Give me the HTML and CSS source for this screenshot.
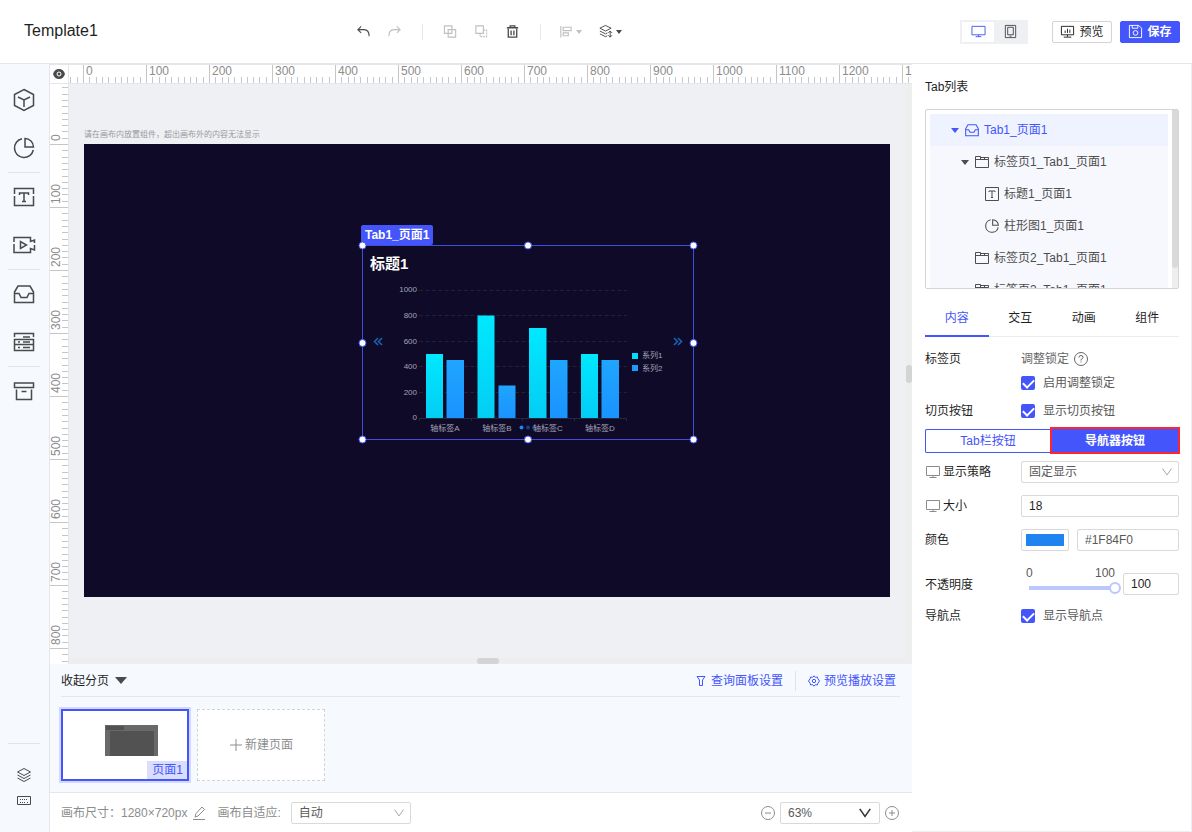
FILE: index.html
```html
<!DOCTYPE html>
<html lang="zh-CN">
<head>
    <meta charset="UTF-8">
    <title>Template1</title>
    <link rel="stylesheet" href="styles.css">
</head>
<body>
    <svg class="defs" width="0" height="0" aria-hidden="true">
        <defs>
            <symbol id="chevron" viewBox="0 0 12 12"><path d="M1.500 2.500 6 9 10.500 2.500" /></symbol>
            <symbol id="screen" viewBox="0 0 16 16"><path d="M1.500 2.500h13v9h-13zM8 11.500v2M4.500 13.500h7" /></symbol>
            <symbol id="pie" viewBox="0 0 24 24"><path d="M10 2.700A9.500 9.500 0 1 0 21.300 14M13 2.500v8.500h8.500A8.500 8.500 0 0 0 13 2.500z" /></symbol>
            <symbol id="folder" viewBox="0 0 16 16"><path d="M1.500 13.500v-11h5v3M1.500 5.500h13v8h-13M6.500 3.500h8v2M10.500 3.500v2" /></symbol>
            <symbol id="tray" viewBox="0 0 24 24"><path d="M2.500 10 6 4h12l3.500 6v10.500h-19zM2.500 11.500h4.500l2 4h6l2-4h4.500" /></symbol>
            <symbol id="layers" viewBox="0 0 16 16"><path d="M8 1.500 14.500 5 8 8.500 1.500 5zM1.500 8 8 11.500 14.500 8M1.500 11 8 14.500 14.500 11" /></symbol>
        </defs>
    </svg>

    <header class="header">
        <h1 class="title">Template1</h1>
        <div class="toolbar">
            <button class="tool" aria-label="撤销"><svg viewBox="0 0 16 16"><path d="M5.500 2.500 2 6l3.500 3.500M2 6h6.500Q14 6 14 13" stroke-width="1.200" /></svg></button>
            <button class="tool off" aria-label="重做"><svg viewBox="0 0 16 16"><path d="M10.500 2.500 14 6l-3.500 3.500M14 6H7.500Q2 6 2 13" stroke-width="1.200" /></svg></button>
            <span class="tool-line"></span>
            <button class="tool off" aria-label="组合"><svg viewBox="0 0 16 16"><path d="M1.500 2h8v8h-8zM5.500 6h8v8h-8z" stroke-width="1.200" /></svg></button>
            <button class="tool off" aria-label="取消组合"><svg viewBox="0 0 16 16"><path d="M2 2h8v8H2z" stroke-width="1.200" /><path d="M10 6.500h3.500v7h-7V10" stroke-width="1.200" stroke-dasharray="2 1" /></svg></button>
            <button class="tool" aria-label="删除"><svg viewBox="0 0 16 16"><path d="M2 4h12M5.500 4V2h5v2M3.500 5v9h9V5M6.500 7v5M9.500 7v5" stroke-width="1.400" /></svg></button>
            <span class="tool-line"></span>
            <button class="tool off wide" aria-label="对齐"><svg viewBox="0 0 16 16"><path d="M3 2v12.500M5.500 3.500H14v3.500H5.500zM5.500 9.500H11v3H5.500z" stroke-width="1.200" /></svg><i class="caret"></i></button>
            <button class="tool wide" aria-label="层级"><svg viewBox="0 0 16 16"><path d="M8 1.500 14 4.500 8 7.500 2 4.500zM2 7.500 8 10.500 10 9.500M2 10.500 8 13.500 10 12.500M13 7.500v6.500M11 9.500l2-2 2 2M11 12l2 2 2-2" /></svg><i class="caret"></i></button>
        </div>
        <div class="device">
            <button class="device-btn active" aria-label="电脑端"><svg viewBox="0 0 16 16"><path d="M1 2.500h14v9H1zM8 11.500v2M5 13.500h6" /></svg></button>
            <button class="device-btn" aria-label="移动端"><svg viewBox="0 0 16 16"><path d="M2.500 1.500h11v13h-11zM5 3.500h6v8H5zM7 13h2" /></svg></button>
        </div>
        <button class="btn"><svg viewBox="0 0 16 16"><path d="M1.500 2.500h13v9h-13zM8 11.500v2M4 14h8M5.500 7v2.500M8 5v4.500M10.500 6v3.500" /></svg>预览</button>
        <button class="btn primary"><svg viewBox="0 0 16 16"><path d="M1.500 1.500h10l3 3v10h-13zM4.500 1.500v3h6v-3" /><circle cx="8" cy="9.500" r="2.500" /></svg>保存</button>
    </header>

    <div class="workspace">
        <nav class="sidebar">
            <button class="side-btn" aria-label="组件"><svg viewBox="0 0 24 24"><path d="M12 1.500 21.500 6.500v11L12 22.500 2.500 17.500v-11zM6 9l6 3 6-3M12 12v7" /></svg></button>
            <button class="side-btn" aria-label="图表"><svg><use href="#pie" /></svg></button>
            <span class="side-line"></span>
            <button class="side-btn" aria-label="文本"><svg viewBox="0 0 24 24"><path d="M2.500 9V3.500h19V9M2.500 11v9.500h19V11M7.500 10V8h9v2M12 8v8.500M10 16.500h4" /></svg></button>
            <button class="side-btn" aria-label="媒体"><svg viewBox="0 0 24 24"><path d="M2 9V4.500h16.500v4l4-1.500v3M2 11v8.500h16.500v-4l4 1.500V12M8.500 8.500v7l6-3.500z" /></svg></button>
            <span class="side-line"></span>
            <button class="side-btn" aria-label="容器"><svg><use href="#tray" /></svg></button>
            <button class="side-btn" aria-label="控件"><svg viewBox="0 0 24 24"><path d="M2.500 7V3.500h19V7M11 7h7M2.500 9.500h19v5h-19zM2.500 14.500h19v6h-19zM6 12h2M11 12h7M6 17.500h2M11 17.500h7" /></svg></button>
            <span class="side-line"></span>
            <button class="side-btn" aria-label="素材"><svg viewBox="0 0 24 24"><path d="M2.500 4h19v4.500h-19zM4.500 10.500v10h15v-10M9.500 12.500h5" /></svg></button>
            <div class="side-bottom">
                <span class="side-line"></span>
                <button class="side-btn small" aria-label="图层"><svg><use href="#layers" /></svg></button>
                <button class="side-btn small" aria-label="快捷键"><svg viewBox="0 0 16 16"><path d="M1.500 3.500h13v8h-13z" /><path d="M4 6.500h8M4 9.500h1M6 9.500h4M11 9.500h1" stroke-dasharray="1 1" /></svg></button>
            </div>
        </nav>

        <main class="center">
            <div class="canvas-area">
                <button class="corner" aria-label="显示参考线"><svg viewBox="0 0 14 12"><path d="M1 6Q2.500 1 7 1t6 5Q11.500 11 7 11T1 6z" fill="#4a4a4a" /><circle cx="7" cy="6" r="2" fill="none" stroke="#fff" /></svg></button>
                <svg class="ruler ruler-x">
                    <defs>
                        <pattern id="ticksX" x="14" width="63" height="19" patternUnits="userSpaceOnUse">
                            <path d="M0 0h1v18H0zM6 12h1v6H6zM13 12h1v6h-1zM19 12h1v6h-1zM25 12h1v6h-1zM32 12h1v6h-1zM38 12h1v6h-1zM44 12h1v6h-1zM50 12h1v6h-1zM57 12h1v6h-1z" fill="#c6c6c6" />
                        </pattern>
                    </defs>
                    <rect width="100%" height="19" fill="url(#ticksX)" />
                    <g><text x="17" y="10">0</text><text x="80" y="10">100</text><text x="143" y="10">200</text><text x="206" y="10">300</text><text x="269" y="10">400</text><text x="332" y="10">500</text><text x="395" y="10">600</text><text x="458" y="10">700</text><text x="521" y="10">800</text><text x="584" y="10">900</text><text x="647" y="10">1000</text><text x="710" y="10">1100</text><text x="773" y="10">1200</text><text x="836" y="10">1300</text></g>
                </svg>
                <svg class="ruler ruler-y">
                    <defs>
                        <pattern id="ticksY" y="60" width="19" height="63" patternUnits="userSpaceOnUse">
                            <path d="M0 0h18v1H0zM12 6h6v1h-6zM12 13h6v1h-6zM12 19h6v1h-6zM12 25h6v1h-6zM12 32h6v1h-6zM12 38h6v1h-6zM12 44h6v1h-6zM12 50h6v1h-6zM12 57h6v1h-6z" fill="#c6c6c6" />
                        </pattern>
                    </defs>
                    <rect width="19" height="100%" fill="url(#ticksY)" />
                    <g transform="rotate(-90)"><text x="-57" y="10">0</text><text x="-120" y="10">100</text><text x="-183" y="10">200</text><text x="-246" y="10">300</text><text x="-309" y="10">400</text><text x="-372" y="10">500</text><text x="-435" y="10">600</text><text x="-498" y="10">700</text><text x="-561" y="10">800</text></g>
                </svg>
                <section class="stage">
                    <p class="hint">请在画布内放置组件，超出画布外的内容无法显示</p>
                    <div class="canvas">
                        <div class="widget">
                            <span class="widget-tag">Tab1_页面1</span>
                            <h2 class="widget-title">标题1</h2>
                            <svg class="chart" viewBox="0 0 332 195">
                                <defs>
                                    <linearGradient id="cyan" x2="0" y2="1"><stop stop-color="#00e8ff" /><stop offset="1" stop-color="#04cdf4" /></linearGradient>
                                    <linearGradient id="blue" x2="0" y2="1"><stop stop-color="#1fa5ff" /><stop offset="1" stop-color="#1a93ff" /></linearGradient>
                                </defs>
                                <path d="M57 45.500h208M57 70.500h208M57 96.500h208M57 121.500h208M57 147.500h208" stroke="#1b2439" stroke-dasharray="4 2.400" />
                                <path d="M57 173.500h208M57.500 173v3M109.500 173v3M160.500 173v3M212.500 173v3M264.500 173v3" stroke="#1e2a40" fill="none" />
                                <g fill="url(#cyan)">
                                    <rect x="64" y="109" width="17" height="64" />
                                    <rect x="115.500" y="70.500" width="17" height="102.500" />
                                    <rect x="167" y="83" width="17.500" height="90" />
                                    <rect x="219" y="109" width="17" height="64" />
                                </g>
                                <g fill="url(#blue)">
                                    <rect x="84.500" y="115" width="17.500" height="58" />
                                    <rect x="136.500" y="140.500" width="17" height="32.500" />
                                    <rect x="188" y="115" width="17.500" height="58" />
                                    <rect x="239.500" y="115" width="17.500" height="58" />
                                </g>
                                <g class="axis axis-y">
                                    <text x="55" y="47">1000</text><text x="55" y="73">800</text><text x="55" y="99">600</text>
                                    <text x="55" y="124">400</text><text x="55" y="150">200</text><text x="55" y="175">0</text>
                                </g>
                                <circle cx="159.500" cy="182.500" r="2" fill="#1f84f0" />
                                <circle cx="166" cy="182.500" r="2" fill="#173f7c" />
                                <circle cx="172" cy="182.500" r="2" fill="#173f7c" />
                                <g class="axis axis-x">
                                    <text x="83" y="186">轴标签A</text><text x="135" y="186">轴标签B</text>
                                    <text x="186" y="186">轴标签C</text><text x="238" y="186">轴标签D</text>
                                </g>
                                <rect x="270" y="108" width="6" height="6" fill="#00dcf9" />
                                <rect x="270" y="120" width="6" height="6" fill="#1c9bff" />
                                <g class="axis"><text x="280" y="113">系列1</text><text x="280" y="126">系列2</text></g>
                                <path d="M16 93l-3.500 3.500L16 100M20 93l-3.500 3.500L20 100M312 93l3.500 3.500L312 100M316 93l3.500 3.500L316 100" stroke="#1a62b6" stroke-width="1.600" fill="none" />
                            </svg>
                            <svg class="handles" viewBox="0 0 340 203">
                                <rect x="4.500" y="4.500" width="331" height="194" fill="none" stroke="#3f4ce0" />
                                <g fill="#fff" stroke="#4355fb"><circle cx="4.500" cy="4.500" r="3.500" /><circle cx="170" cy="4.500" r="3.500" /><circle cx="335.500" cy="4.500" r="3.500" /><circle cx="4.500" cy="102" r="3.500" /><circle cx="335.500" cy="102" r="3.500" /><circle cx="4.500" cy="198.500" r="3.500" /><circle cx="170" cy="198.500" r="3.500" /><circle cx="335.500" cy="198.500" r="3.500" /></g>
                            </svg>
                        </div>
                    </div>
                </section>
                <div class="bar-y"><i></i></div>
                <div class="bar-x"><i></i></div>
            </div>

            <section class="pages">
                <div class="pages-head">
                    <button class="collapse">收起分页<i class="caret"></i></button>
                    <a class="link" href="#"><svg viewBox="0 0 12 12"><path d="M2 1.500h8L7.500 5v5.500h-3V5z" /></svg>查询面板设置</a>
                    <a class="link" href="#"><svg viewBox="0 0 12 12"><path d="M6 .8 7.300 2.300 9.300 2 10 3.900 11.500 6 10 8.100 9.300 10 7.300 9.700 6 11.200 4.700 9.700 2.700 10 2 8.100.5 6 2 3.900 2.700 2 4.700 2.300z" /><circle cx="6" cy="6" r="1.700" /></svg>预览播放设置</a>
                </div>
                <div class="page-list">
                    <button class="page active">
                        <svg class="thumb" viewBox="0 0 53 31"><path d="M0 0h53v31H0z" fill="#696969" /><path d="M1 1h18v4H1zM5 6h44v25H5z" fill="#525252" /></svg>
                        <span class="page-name">页面1</span>
                    </button>
                    <button class="page new"><svg viewBox="0 0 14 14"><path d="M1 7h12M7 1v12" /></svg>新建页面</button>
                </div>
            </section>

            <footer class="footer">
                <span>画布尺寸：1280×720px</span>
                <button class="round" aria-label="编辑尺寸"><svg viewBox="0 0 14 14"><path d="M1 13.500h12M3 11l1-3.500L10 1l2.500 2.500L6 10z" /></svg></button>
                <label class="fit-label" for="fit">画布自适应:</label>
                <div class="select fit"><select id="fit"><option>自动</option></select><svg><use href="#chevron" /></svg></div>
                <div class="zoom">
                    <button class="round" aria-label="缩小"><svg viewBox="0 0 14 14"><circle cx="7" cy="7" r="6.500" /><path d="M4 7h6" /></svg></button>
                    <div class="select scale"><select aria-label="缩放比例"><option>63%</option></select><svg><use href="#chevron" /></svg></div>
                    <button class="round" aria-label="放大"><svg viewBox="0 0 14 14"><circle cx="7" cy="7" r="6.500" /><path d="M4 7h6M7 4v6" /></svg></button>
                </div>
            </footer>
        </main>

        <aside class="panel">
            <h2 class="panel-title">Tab列表</h2>
            <div class="tree">
                <ul class="tree-list">
                    <li class="node active"><i class="caret"></i><svg><use href="#tray" /></svg>Tab1_页面1</li>
                    <li class="node level-2"><i class="caret"></i><svg><use href="#folder" /></svg>标签页1_Tab1_页面1</li>
                    <li class="node level-3"><svg viewBox="0 0 16 16"><path d="M1.500 1.500h13v13h-13zM5 6V5h6v1M8 5v6.500M7 11.500h2" /></svg>标题1_页面1</li>
                    <li class="node level-3"><svg class="bold"><use href="#pie" /></svg>柱形图1_页面1</li>
                    <li class="node level-2 leaf"><svg><use href="#folder" /></svg>标签页2_Tab1_页面1</li>
                    <li class="node level-2 leaf"><svg><use href="#folder" /></svg>标签页3_Tab1_页面1</li>
                </ul>
                <div class="tree-bar"><i></i></div>
            </div>
            <div class="tabs">
                <button class="tab active">内容</button>
                <button class="tab">交互</button>
                <button class="tab">动画</button>
                <button class="tab">组件</button>
            </div>
            <form class="form">
                <div class="row"><span class="label">标签页</span><span class="lock">调整锁定<svg viewBox="0 0 14 14"><circle cx="7" cy="7" r="6.500" /><path d="M5 5.500Q5 3.500 7 3.500t2 2Q9 6.500 7 7.500v1M7 9.500v1" /></svg></span></div>
                <div class="row check-row"><span class="label"></span><label class="check"><input type="checkbox" checked>启用调整锁定</label></div>
                <div class="row"><span class="label">切页按钮</span><label class="check"><input type="checkbox" checked>显示切页按钮</label></div>
                <div class="segment">
                    <button type="button">Tab栏按钮</button>
                    <button type="button" class="active">导航器按钮</button>
                </div>
                <div class="row field"><label class="label" for="policy"><svg><use href="#screen" /></svg>显示策略</label><div class="select"><select id="policy"><option>固定显示</option></select><svg><use href="#chevron" /></svg></div></div>
                <div class="row field"><label class="label" for="size"><svg><use href="#screen" /></svg>大小</label><input class="input" id="size" type="text" value="18"></div>
                <div class="row field"><label class="label" for="hex">颜色</label><input class="swatch" type="color" value="#1f84f0" aria-label="选择颜色"><input class="input hex" id="hex" type="text" value="#1F84F0"></div>
                <div class="row opacity">
                    <label class="label" for="alpha">不透明度</label>
                    <div class="slider">
                        <div class="scale-text"><span>0</span><span>100</span></div>
                        <input type="range" min="0" max="100" value="100" aria-label="不透明度滑块">
                    </div>
                    <input class="input" id="alpha" type="text" value="100">
                </div>
                <div class="row"><span class="label">导航点</span><label class="check"><input type="checkbox" checked>显示导航点</label></div>
            </form>
        </aside>
    </div>
</body>
</html>
```
FILE: styles.css
```css
* {
    box-sizing: border-box;
}

body {
    margin: 0;
    height: 100vh;
    display: flex;
    flex-direction: column;
    font: 12px/20px "Liberation Sans", "Noto Sans CJK SC", sans-serif;
    color: #1f1f1f;
    background: #fff;
    overflow: hidden;
}

h1, h2, p, ul {
    margin: 0;
    padding: 0;
    font-weight: normal;
}

button, input, select {
    font: inherit;
    color: inherit;
    margin: 0;
    padding: 0;
    border: none;
    background: none;
    border-radius: 0;
}

button {
    cursor: pointer;
}

svg {
    fill: none;
    stroke: currentColor;
    flex: none;
}

.defs {
    position: absolute;
}

.caret {
    border: 4px solid transparent;
    border-top: 5px solid currentColor;
    border-bottom: none;
}

/* header */
.header {
    height: 64px;
    flex: none;
    display: flex;
    align-items: center;
    padding: 0 12px 0 24px;
    border-bottom: 1px solid #e4e6eb;
}

.title {
    width: 324px;
    font-size: 16px;
    line-height: 24px;
    padding-bottom: 2px;
}

.toolbar {
    flex: 1;
    display: flex;
    align-items: center;
    color: #4a4a4a;
}

.tool {
    width: 31px;
    height: 24px;
    display: flex;
    align-items: center;
    justify-content: center;
}

.tool svg {
    width: 15px;
    height: 15px;
}

.tool.off {
    color: #c0c0c0;
}

.tool.wide {
    width: 40px;
    justify-content: flex-start;
    gap: 3px;
    padding-left: 5px;
}

.tool .caret {
    border-width: 4px 3px 0;
}

.tool-line {
    width: 1px;
    height: 16px;
    margin: 0 12px;
    background: #e8e8e8;
}

.device {
    display: flex;
    padding: 2px;
    background: #eff0f4;
    margin-right: 24px;
}

.device-btn {
    width: 32px;
    height: 20px;
    display: flex;
    align-items: center;
    justify-content: center;
    color: #4a4a4a;
}

.device-btn svg {
    width: 15px;
    height: 15px;
}

.device-btn.active {
    background: #fff;
    color: #4355fb;
}

.btn {
    width: 60px;
    height: 22px;
    display: flex;
    align-items: center;
    justify-content: center;
    gap: 4px;
    border: 1px solid #d4d4d4;
    border-radius: 2px;
}

.btn svg {
    width: 15px;
    height: 15px;
}

.btn.primary {
    margin-left: 8px;
    border-color: #4355fb;
    background: #4355fb;
    color: #fff;
    font-weight: bold;
}

.workspace {
    flex: 1;
    min-height: 0;
    display: flex;
}

/* left icon bar */
.sidebar {
    width: 50px;
    flex: none;
    display: flex;
    flex-direction: column;
    align-items: center;
    padding: 12px 1px 0 0;
    background: #f6fafe;
    border-right: 1px solid #e4e6eb;
    color: #4a4a4a;
}

.side-btn {
    width: 48px;
    height: 48px;
    display: flex;
    align-items: center;
    justify-content: center;
}

.side-btn svg {
    width: 24px;
    height: 24px;
    stroke-width: 1.5;
}

.side-line {
    width: 32px;
    height: 1px;
    background: #e1e4e9;
}

.side-bottom {
    margin-top: auto;
    padding-bottom: 18px;
    display: flex;
    flex-direction: column;
    align-items: center;
}

.side-btn.small {
    height: 26px;
}

.side-btn.small svg {
    width: 16px;
    height: 16px;
    stroke-width: 1;
}

.side-bottom .side-line {
    margin-bottom: 18px;
}

/* rulers and canvas */
.center {
    flex: 1;
    min-width: 0;
    display: flex;
    flex-direction: column;
}

.canvas-area {
    flex: 1;
    min-height: 0;
    display: grid;
    grid-template-columns: 19px 1fr 6px;
    grid-template-rows: 20px 1fr 6px;
    background: #eff0f4;
}

.corner {
    border: solid #e4e6eb;
    border-width: 1px 1px 1px 0;
    background: #fff;
    display: flex;
    align-items: center;
    justify-content: center;
}

.corner svg {
    width: 14px;
    height: 12px;
    stroke: none;
}

.ruler {
    background: #fff;
    stroke: none;
    font-size: 12px;
    overflow: hidden;
}

.ruler text {
    fill: #8c8c8c;
}

.ruler-x {
    grid-column: 2 / 4;
    width: 100%;
    height: 20px;
    border: solid #e4e6eb;
    border-width: 1px 0;
}

.ruler-y {
    grid-column: 1;
    grid-row: 2 / 4;
    width: 19px;
    height: 100%;
    border-right: 1px solid #e4e6eb;
}

.stage {
    grid-column: 2;
    grid-row: 2;
    min-width: 0;
    overflow: hidden;
    padding: 46px 16px 0 15px;
}

.hint {
    font-size: 8px;
    line-height: 10px;
    margin-bottom: 4px;
    color: #999;
}

.canvas {
    position: relative;
    aspect-ratio: 16 / 9;
    background: #0f0a28;
}

.widget {
    position: absolute;
    left: 278px;
    top: 101px;
    width: 332px;
    height: 195px;
}

.widget-tag {
    position: absolute;
    left: -1px;
    top: -20px;
    padding: 0 4px;
    background: #4355fb;
    border-radius: 2px;
    color: #fff;
    font-weight: bold;
    white-space: nowrap;
}

.widget-title {
    position: absolute;
    left: 8px;
    top: 9px;
    font-size: 15px;
    font-weight: bold;
    color: #fff;
}

.chart {
    display: block;
    width: 332px;
    height: 195px;
    stroke: none;
}

.axis {
    fill: #a3a3b5;
    font-size: 8px;
}

.axis-y {
    text-anchor: end;
}

.axis-x {
    text-anchor: middle;
}

.handles {
    position: absolute;
    left: -4px;
    top: -4px;
    width: 340px;
    height: 203px;
}

.bar-x, .bar-y {
    display: flex;
    align-items: center;
    justify-content: center;
    background: #eee;
}

.bar-y {
    grid-column: 3;
    grid-row: 2 / 4;
}

.bar-x {
    grid-column: 2;
    grid-row: 3;
}

.bar-x i, .bar-y i {
    width: 6px;
    height: 18px;
    border-radius: 3px;
    background: #d4d4d4;
}

.bar-x i {
    width: 22px;
    height: 6px;
}

/* page list */
.pages {
    height: 128px;
    flex: none;
    padding: 0 12px 0 11px;
    background: #f6fafe;
}

.pages-head {
    height: 33px;
    display: flex;
    align-items: center;
    padding-top: 1px;
    border-bottom: 1px solid #e4e6eb;
}

.collapse {
    display: flex;
    align-items: center;
    gap: 6px;
    margin-right: auto;
}

.collapse .caret {
    border-width: 7px 6px 0;
    border-top-color: #4a4a4a;
}

.link {
    display: flex;
    align-items: center;
    gap: 4px;
    padding: 0 4px 0 12px;
    color: #4355fb;
    text-decoration: none;
}

.link + .link {
    margin-left: 8px;
    border-left: 1px solid #e1e4e9;
}

.link svg {
    width: 12px;
    height: 12px;
}

.page-list {
    display: flex;
    gap: 8px;
    padding-top: 12px;
}

.page {
    width: 128px;
    height: 72px;
    display: flex;
    align-items: center;
    justify-content: center;
    gap: 2px;
    background: #fff;
    border: 1px dashed #d4d4d4;
    color: #8c8c8c;
}

.page svg {
    width: 14px;
    height: 14px;
}

.page.active {
    position: relative;
    border: 2px solid #4355fb;
    box-shadow: 0 0 0 2px #d4d9fc;
}

.page .thumb {
    width: 53px;
    height: 31px;
    margin-left: 12px;
    margin-bottom: 10px;
    stroke: none;
}

.page-name {
    position: absolute;
    right: 0;
    bottom: 0;
    padding: 0 4px 0 5px;
    line-height: 18px;
    background: #d9ddfe;
    color: #4355fb;
}

/* status bar */
.footer {
    height: 40px;
    flex: none;
    display: flex;
    align-items: center;
    padding: 0 12px 0 11px;
    border-top: 1px solid #e4e6eb;
    color: #8c8c8c;
}

.round {
    width: 14px;
    height: 14px;
    display: flex;
    margin: 0 5px;
}

.round svg {
    width: 14px;
    height: 14px;
}

.fit-label {
    margin: 0 10px 0 6px;
}

.zoom {
    margin-left: auto;
    display: flex;
    align-items: center;
}

.zoom .round:last-child {
    margin-right: 1px;
}

.select {
    display: grid;
    flex: 1;
    align-items: center;
    color: #595959;
}

.select select,
.select svg {
    grid-area: 1 / 1;
}

.select select {
    appearance: none;
    width: 100%;
    height: 22px;
    padding: 0 7px;
    border: 1px solid #d9d9d9;
    border-radius: 2px;
    background: #fff;
}

.select svg {
    width: 12px;
    height: 12px;
    justify-self: end;
    margin-right: 6px;
    color: #aaa;
    pointer-events: none;
}

.fit {
    flex: none;
    width: 120px;
}

.scale {
    flex: none;
    width: 100px;
}

.scale svg {
    width: 14px;
    height: 14px;
    margin-right: 8px;
    color: #333;
    stroke-width: 1.3;
}

/* settings panel */
.panel {
    width: 280px;
    flex: none;
    padding: 13px 12px 0 13px;
    border: solid #eceef3;
    border-width: 0 1px 1px 0;
}

.panel-title {
    font-size: 12px;
    margin-bottom: 12px;
}

.tree {
    height: 180px;
    display: flex;
    border: 1px solid #d4d4d4;
    border-radius: 2px;
    overflow: hidden;
}

.tree-list {
    flex: 1;
    list-style: none;
    margin: 4px 4px 0;
}

.node {
    height: 32px;
    display: flex;
    align-items: center;
    padding-left: 21px;
    background: #f7f8fe;
    color: #4d4d4d;
}

.node svg {
    width: 16px;
    height: 16px;
    margin: 0 4px 0 5px;
}

.node.active {
    background: #eff3ff;
    color: #4355fb;
}

.node.active svg,
.node svg.bold {
    stroke-width: 1.6;
}

.node.level-2 {
    padding-left: 31px;
}

.node.level-3 {
    padding-left: 49px;
}

.node.leaf {
    padding-left: 39px;
}

.tree-bar {
    width: 6px;
    background: #eee;
}

.tree-bar i {
    display: block;
    height: 158px;
    border-radius: 0 0 3px 3px;
    background: #d9d9d9;
}

.tabs {
    display: flex;
    margin-top: 8px;
    box-shadow: inset 0 -1px #ececec;
}

.tab {
    flex: 1;
    height: 40px;
    padding-top: 1px;
}

.tab.active {
    color: #4355fb;
    border-bottom: 2px solid #4355fb;
    padding-top: 3px;
}

.form {
    padding-top: 12px;
    display: flex;
    flex-direction: column;
}

.row {
    display: flex;
    align-items: center;
}

.label {
    width: 96px;
    flex: none;
    display: flex;
    align-items: center;
    gap: 2px;
}

.label svg {
    width: 16px;
    height: 16px;
    color: #8c8c8c;
}

.lock {
    display: flex;
    align-items: center;
    gap: 5px;
    color: #666;
}

.lock svg {
    width: 14px;
    height: 14px;
}

.check-row {
    margin: 4px 0 8px;
}

.check {
    display: flex;
    align-items: center;
    gap: 8px;
    color: #595959;
}

.check input {
    appearance: none;
    width: 14px;
    height: 14px;
    display: grid;
    place-items: center;
    border-radius: 2px;
    background: #4355fb;
}

.check input::before {
    content: "";
    width: 9px;
    height: 5px;
    border: solid #fff;
    border-width: 0 0 2px 2px;
    transform: translateY(-1px) rotate(-45deg);
}

.segment {
    display: flex;
    align-items: center;
    margin: 6px -1px 7px 0;
    color: #4355fb;
}

.segment button {
    flex: 1;
    height: 24px;
    border: 1px solid #4355fb;
    border-right: none;
    border-radius: 2px 0 0 2px;
}

.segment .active {
    flex: none;
    width: 130px;
    height: 27px;
    border: 2px solid #fb2630;
    border-radius: 0;
    background: #4355fb;
    color: #fff;
    font-weight: bold;
}

.field {
    margin-bottom: 12px;
}

.input {
    flex: 1;
    min-width: 0;
    height: 22px;
    padding: 0 7px;
    border: 1px solid #d9d9d9;
    border-radius: 2px;
}

.swatch {
    width: 48px;
    height: 22px;
    margin-right: 8px;
    padding: 4px;
    border: 1px solid #d9d9d9;
    border-radius: 2px;
}

.swatch::-webkit-color-swatch-wrapper {
    padding: 0;
}

.swatch::-webkit-color-swatch {
    border: none;
}

.hex {
    color: #595959;
}

.opacity {
    align-items: flex-end;
    margin: 2px 0 11px;
}

.slider {
    width: 102px;
    padding: 0 2px 0 5px;
    color: #595959;
}

.scale-text {
    display: flex;
    justify-content: space-between;
    line-height: 16px;
    padding-right: 6px;
}

.slider input {
    appearance: none;
    display: block;
    width: 92px;
    height: 14px;
    margin-left: 3px;
    background: linear-gradient(#bcc7fe, #bcc7fe) no-repeat 0 5px / 86px 4px;
}

.slider input::-webkit-slider-thumb {
    appearance: none;
    width: 12px;
    height: 12px;
    border: 2px solid #bcc7fe;
    border-radius: 50%;
    background: #fff;
}
```
